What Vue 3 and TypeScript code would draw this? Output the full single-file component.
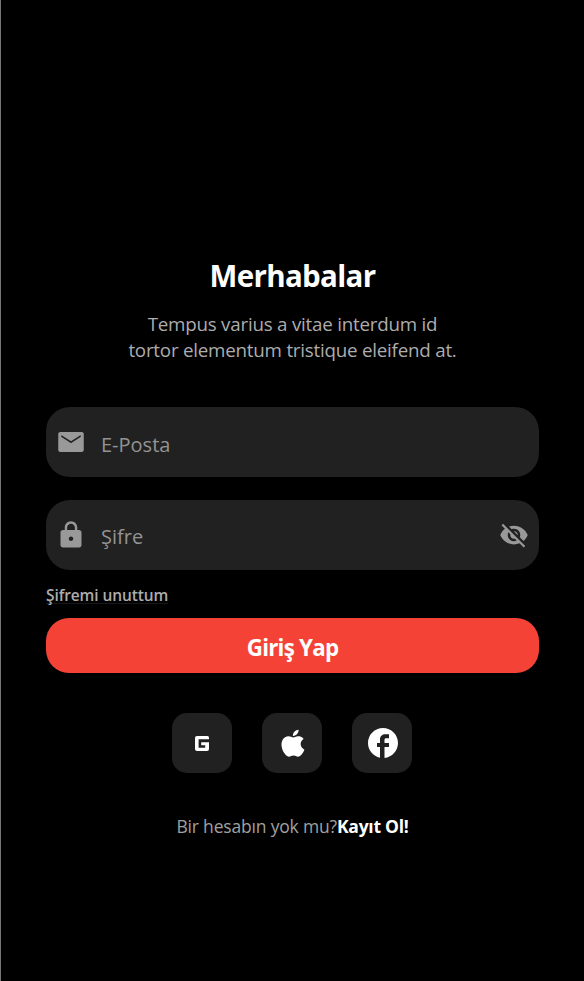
<script setup lang="ts">
import { ref } from 'vue'

interface Field {
  id: string
  label: string
  type: string
  icon: string
  secret: boolean
}

const fields: Field[] = [
  {
    id: 'email',
    label: 'E-Posta',
    type: 'email',
    icon: 'M20.5 4h-17C2.6 4 1.8 4.7 1.8 5.6V18.4c0 .9.8 1.6 1.7 1.6h17c.9 0 1.7-.7 1.7-1.6V5.6c0-.9-.8-1.6-1.7-1.6zM19.6 7.9l-7.07 4.7c-.32.2-.74.2-1.06 0L4.4 7.9c-.3-.2-.4-.43-.3-.7.15-.4.6-.45 1-.2L12 11.4 18.9 7c.4-.25.85-.2 1 .2.1.27 0 .5-.3.7z',
    secret: false,
  },
  {
    id: 'password',
    label: 'Şifre',
    type: 'password',
    icon: 'M18.5 8H17V6c0-2.76-2.24-5-5-5S7 3.24 7 6v2H5.5c-1.1 0-1.9.9-1.9 2v10c0 1.1.8 2 1.9 2h13c1.1 0 1.9-.9 1.9-2V10c0-1.1-.8-2-1.9-2zM12 16.8c-1 0-1.8-.8-1.8-1.8s.8-1.8 1.8-1.8 1.8.8 1.8 1.8-.8 1.8-1.8 1.8zM15.1 8H8.9V6c0-1.71 1.39-3.1 3.1-3.1 1.71 0 3.1 1.39 3.1 3.1v2z',
    secret: true,
  },
]

const values = ref<Record<string, string>>({ email: '', password: '' })
</script>

<template>
  <main class="screen">
    <h1 class="title">Merhabalar</h1>
    <p class="intro">
      Tempus varius a vitae interdum id<br />
      tortor elementum tristique eleifend at.
    </p>

    <form class="form" @submit.prevent>
      <label v-for="f in fields" :key="f.id" class="field" :class="f.id">
        <svg class="icon" viewBox="0 0 24 24"><path fill-rule="evenodd" :d="f.icon" /></svg>
        <input v-model="values[f.id]" :type="f.type" :placeholder="f.label" />
        <svg v-if="f.secret" class="icon" viewBox="0 0 24 24">
          <path d="M12 7c2.76 0 5 2.24 5 5 0 .65-.13 1.26-.36 1.83l2.92 2.92c1.51-1.26 2.7-2.89 3.43-4.75-1.73-4.39-6-7.5-11-7.5-1.4 0-2.74.25-3.98.7l2.16 2.16C10.74 7.13 11.35 7 12 7zM2 4.27l2.28 2.28.46.46C3.08 8.3 1.78 10.02 1 12c1.73 4.39 6 7.5 11 7.5 1.55 0 3.03-.3 4.38-.84l.42.42L19.73 22 21 20.73 3.27 3 2 4.27zM7.53 9.8l1.55 1.55c-.05.21-.08.43-.08.65 0 1.66 1.34 3 3 3 .22 0 .44-.03.65-.08l1.55 1.55c-.67.33-1.41.53-2.2.53-2.76 0-5-2.24-5-5 0-.79.2-1.53.53-2.2zm4.31-.78l3.15 3.15.02-.16c0-1.66-1.34-3-3-3l-.17.01z" />
        </svg>
      </label>
      <a class="forgot">Şifremi unuttum</a>
      <button class="submit" type="submit">Giriş Yap</button>
    </form>

    <div class="socials">
      <button class="social" aria-label="Google">
        <svg class="google" viewBox="0 0 14 15">
          <path d="M2 0H12.5Q14 .2 14 1.5V3.2H3.6V11.8H10.2V9.3H6.2V6.2H14V13Q14 15 12 15H2Q0 15 0 13V2Q0 0 2 0Z" />
        </svg>
      </button>
      <button class="social" aria-label="Apple">
        <svg class="apple" viewBox="0 0 24 24" preserveAspectRatio="none">
          <path d="M18.71 19.5c-.83 1.24-1.71 2.45-3.05 2.47-1.34.03-1.77-.79-3.29-.79-1.53 0-2 .77-3.27.82-1.31.05-2.3-1.32-3.14-2.53C4.25 17 2.94 12.45 4.7 9.39c.87-1.52 2.43-2.48 4.12-2.51 1.28-.02 2.5.87 3.29.87.78 0 2.26-1.07 3.81-.91.65.03 2.47.26 3.64 1.98-.09.06-2.17 1.28-2.15 3.81.03 3.02 2.65 4.03 2.68 4.04-.03.07-.42 1.44-1.38 2.83M13 3.5c.73-.83 1.94-1.46 2.94-1.5.13 1.17-.34 2.35-1.04 3.19-.69.85-1.83 1.51-2.95 1.42-.15-1.15.41-2.35 1.05-3.11z" />
        </svg>
      </button>
      <button class="social" aria-label="Facebook">
        <svg class="facebook" viewBox="0 0 24 24">
          <path d="M22 12c0-5.52-4.48-10-10-10S2 6.48 2 12c0 4.84 3.44 8.87 8 9.8V14.6H8v-2.6h2V9.5C10 7.57 11.57 6.2 13.5 6.2H16v2.6h-2c-.55 0-1 .45-1 1v2.2h3v2.6h-3v7.35c5.05-.5 9-4.76 9-9.95z" />
        </svg>
      </button>
    </div>

    <p class="signup"><span class="ask">Bir hesabın yok mu?</span><a class="join">Kayıt Ol!</a></p>
  </main>
</template>

<style>
body {
  background: #000;
}
</style>

<style scoped>
.screen {
  box-sizing: border-box;
  height: 981px;
  padding: 256px 45px 0;
  border-left: 1px solid #777;
  background: #000;
  display: flex;
  flex-direction: column;
  align-items: center;
  font-family: "Open Sans", "Noto Sans", sans-serif;
  color: #fff;
}
.title {
  margin: 0;
  font-size: 29.5px;
  line-height: 40px;
  font-weight: 700;
  letter-spacing: -0.65px;
}
.intro {
  margin: 15px 0 0;
  text-align: center;
  font-size: 18.75px;
  line-height: 26px;
  letter-spacing: -0.22px;
  color: #adadad;
  white-space: nowrap;
}
.form {
  width: 493px;
  margin-top: 44px;
  display: flex;
  flex-direction: column;
}
.field {
  box-sizing: border-box;
  height: 70px;
  border-radius: 24px;
  background: #212121;
  display: flex;
  align-items: center;
  padding: 0 10px;
}
.field.password {
  margin-top: 22.5px;
}
.icon {
  width: 30px;
  height: 30px;
  flex: none;
  fill: #999;
}
input {
  flex: 1;
  min-width: 0;
  margin: 5px 0 0 15px;
  padding: 0;
  border: 0;
  outline: 0;
  background: transparent;
  color: #fff;
  font: 400 20px/28px "Open Sans", "Noto Sans", sans-serif;
}
input::placeholder {
  color: #939393;
  opacity: 1;
}
.forgot {
  align-self: flex-start;
  margin-top: 14px;
  font-size: 15.5px;
  line-height: 22px;
  font-weight: 600;
  letter-spacing: -0.1px;
  color: #adadad;
  text-decoration: underline #17171c 1px;
  text-underline-offset: 2px;
  text-decoration-skip-ink: none;
}
button {
  border: 0;
  padding: 0;
  margin: 0;
  color: #fff;
}
.submit {
  height: 55px;
  margin-top: 12.5px;
  padding-top: 4px;
  border-radius: 23px;
  background: #f44336;
  font: 700 22.3px/30px "Open Sans", "Noto Sans", sans-serif;
  letter-spacing: -0.75px;
}
.socials {
  display: flex;
  gap: 30px;
  margin: 40px 1px 0 0;
}
.social {
  width: 60px;
  height: 60px;
  border-radius: 15px;
  background: #212121;
  display: flex;
  align-items: center;
  justify-content: center;
}
.social svg {
  fill: #fff;
  flex: none;
}
.google {
  width: 14px;
  height: 15px;
}
.apple {
  width: 34px;
  height: 32.4px;
  margin-left: 1px;
}
.facebook {
  width: 36px;
  height: 36px;
  margin-left: 2px;
}
.signup {
  margin: 40px 0 0;
  font-size: 17.5px;
  line-height: 26px;
  white-space: nowrap;
}
.ask {
  color: #a0a0a0;
  letter-spacing: -0.18px;
}
.join {
  font-weight: 700;
  letter-spacing: -0.25px;
}
</style>
